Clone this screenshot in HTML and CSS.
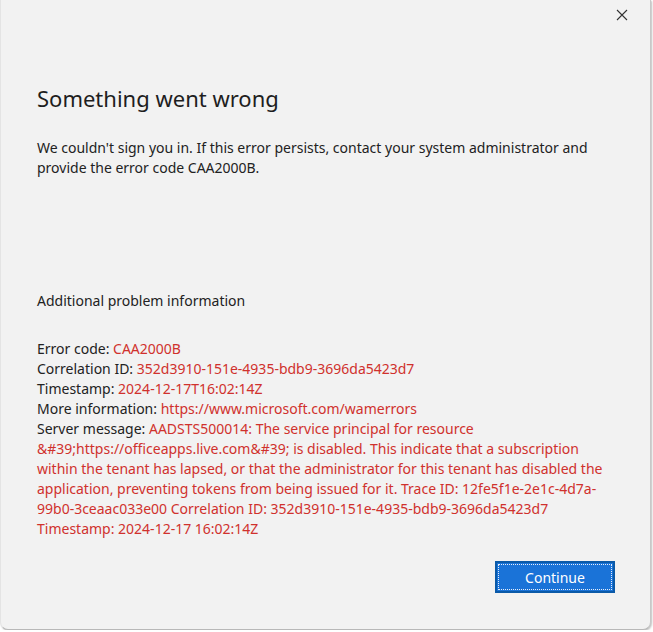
FILE: index.html
```html
<!DOCTYPE html>
<html>
<head>
<meta charset="utf-8">
<link rel="stylesheet" href="styles.css">
</head>
<body>
<div class="window">
  <div class="titlebar">
    <button class="close" aria-label="Close">
      <svg width="12" height="12" viewBox="0 0 12 12"><path d="M1 1 L11 11 M11 1 L1 11" stroke="#333" stroke-width="1.1" fill="none"/></svg>
    </button>
  </div>
  <div class="content">
    <h1 class="title">Something went wrong</h1>
    <p class="intro">We couldn't sign you in. If this error persists, contact your system administrator and provide the error code CAA2000B.</p>
    <h2 class="subhead">Additional problem information</h2>
    <div class="details">
      <div>Error code: <span class="red">CAA2000B</span></div>
      <div>Correlation ID: <span class="red">352d3910-151e-4935-bdb9-3696da5423d7</span></div>
      <div>Timestamp: <span class="red">2024-12-17T16:02:14Z</span></div>
      <div>More information: <span class="red">https://www.microsoft.com/wamerrors</span></div>
      <div>Server message: <span class="red">AADSTS500014: The service principal for resource &amp;#39;https://officeapps.live.com&amp;#39; is disabled. This indicate that a subscription within the tenant has lapsed, or that the administrator for this tenant has disabled the application, preventing tokens from being issued for it. Trace ID: 12fe5f1e-2e1c-4d7a-99b0-3ceaac033e00 Correlation ID: 352d3910-151e-4935-bdb9-3696da5423d7 Timestamp: 2024-12-17 16:02:14Z</span></div>
    </div>
  </div>
  <div class="footer">
    <button class="primary"><span class="focus">Continue</span></button>
  </div>
</div>
</body>
</html>
```
FILE: styles.css
```css
html, body {
  margin: 0;
  padding: 0;
  background: #ffffff;
}
body {
  font-family: "Noto Sans", "Open Sans", sans-serif;
  color: #222222;
}
.window {
  width: 651px;
  height: 630px;
  background: #f2f2f2;
  border-right: 1px solid #c8c8c8;
  border-bottom: 1px solid #b8b8b8;
  border-left: 1px solid #e4e4e4;
  border-radius: 0 0 8px 8px;
  box-shadow: 1px 1px 2px rgba(0,0,0,0.25);
  display: flex;
  flex-direction: column;
  box-sizing: border-box;
  position: relative;
}
.titlebar {
  height: 30px;
  display: flex;
  justify-content: flex-end;
}
.close {
  width: 44px;
  height: 30px;
  border: 0;
  background: transparent;
  padding: 0;
  display: flex;
  align-items: center;
  justify-content: center;
  margin-right: 6px;
}
.content {
  padding: 0 36px 0 36px;
  flex: 1;
}
.title {
  margin: 52px 0 0 0;
  font-weight: 400;
  font-size: 22px;
  line-height: 32px;
  color: #1e1e1e;
}
.intro {
  margin: 24px 0 0 0;
  font-size: 14px;
  line-height: 20px;
}
.subhead {
  margin: 113px 0 0 0;
  font-weight: 400;
  font-size: 14px;
  line-height: 20px;
}
.details {
  margin-top: 28px;
  font-size: 14px;
  line-height: 20px;
}
.red {
  color: #d0312d;
}
.footer {
  display: flex;
  justify-content: flex-end;
  padding: 0 35px 36px 0;
}
.primary {
  width: 120px;
  height: 32px;
  background: #1a73d8;
  border: 2px solid #0b5aa8;
  padding: 1px;
  box-sizing: border-box;
  font-family: "Noto Sans", sans-serif;
  font-size: 14px;
  color: #ffffff;
}
.focus {
  display: flex;
  align-items: center;
  justify-content: center;
  height: 100%;
  border: 1px dotted #e8eef8;
  box-sizing: border-box;
}
```
